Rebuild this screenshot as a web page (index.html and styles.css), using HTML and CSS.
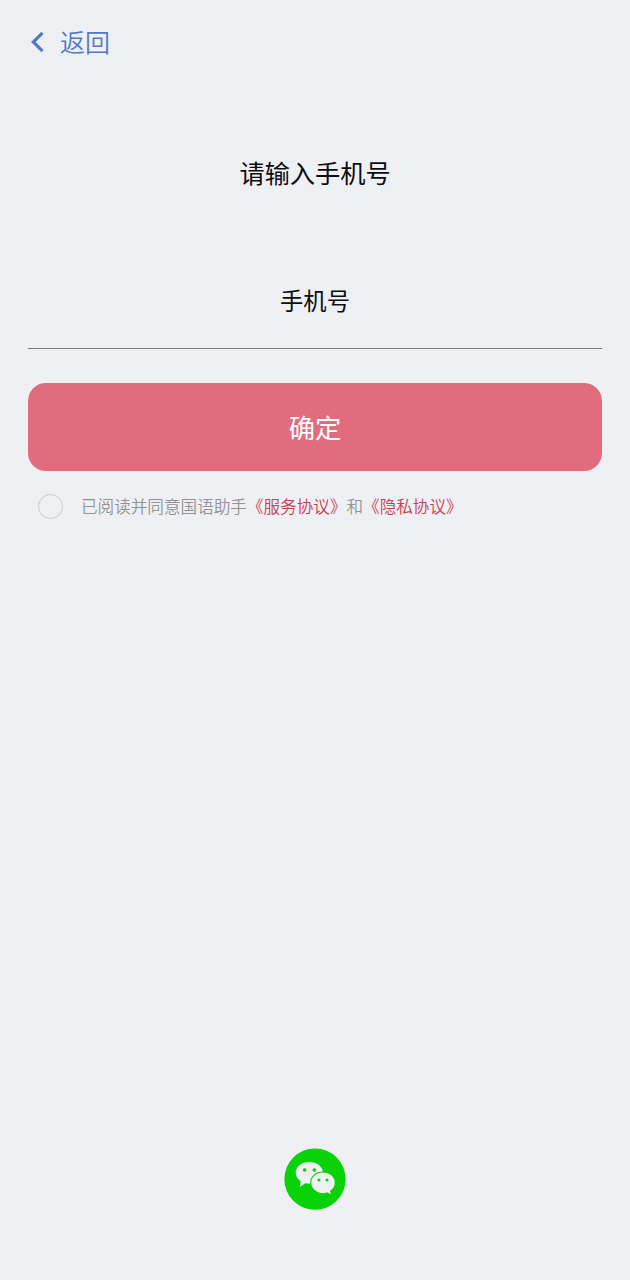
FILE: index.html
```html
<!DOCTYPE html>
<html lang="zh-CN">
<head>
<meta charset="utf-8">
<title>请输入手机号</title>
<link rel="stylesheet" href="styles.css">
</head>
<body>
<div class="screen">
  <header class="nav">
    <svg class="chevron" viewBox="0 0 16 24" fill="none"><path d="M13.5 2.8 4.3 12l9.2 9.2" stroke="#4f7ac9" stroke-width="3.2"/></svg>
    <span>返回</span>
  </header>
  <h1 class="title">请输入手机号</h1>
  <div class="field">手机号</div>
  <button class="submit">确定</button>
  <div class="agree">
    <span class="radio"></span>
    <p class="terms">已阅读并同意国语助手<span class="link">《服务协议》</span>和<span class="link">《隐私协议》</span></p>
  </div>
  <footer class="social">
    <svg class="wechat" viewBox="12 9 186 186">
      <circle cx="105" cy="102.5" r="92" fill="#08d208"/>
      <path d="M88 51c-23 0-41 14-41 32 0 11 6 19 15 25l-2 17 16-10c5 1 9 1 14 1 20-1 39-14 39-33 0-18-18-32-41-32Z" fill="#eef0f4"/>
      <path d="M129 81c-21 0-37 14-37 32s16 33 37 33c5 0 9-1 13-2l13 8-3-14c9-6 14-15 14-25 0-18-16-32-37-32Z" fill="#eef0f4" stroke="#08d208" stroke-width="3.5"/>
      <g fill="#08d208"><circle cx="74" cy="75" r="5.5"/><circle cx="103" cy="75" r="5.5"/><circle cx="117" cy="105" r="4.5"/><circle cx="141" cy="105" r="4.5"/></g>
    </svg>
  </footer>
</div>
</body>
</html>
```
FILE: styles.css
```css
* { box-sizing: border-box; }
body {
  margin: 0;
  background: #eef0f4;
  font-family: "Noto Sans CJK SC", sans-serif;
  color: #0b0b10;
}
.screen {
  height: 1280px;
  padding: 23px 28px 70px;
  display: flex;
  flex-direction: column;
}
.nav {
  display: flex;
  align-items: center;
  height: 36px;
  padding-left: 1px;
  gap: 15px;
  color: #4f7ac9;
  font-size: 25px;
  font-weight: 350;
}
.chevron { width: 16px; height: 24px; margin-top: 2px; }
.title {
  margin: 95px 0 0;
  font-size: 25.2px;
  line-height: 36px;
  font-weight: 400;
  text-align: center;
}
.field {
  margin-top: 92px;
  height: 67px;
  border-bottom: 1.5px solid #777a80;
  font-size: 23.3px;
  line-height: 36px;
  text-align: center;
}
.submit {
  margin-top: 34px;
  height: 88px;
  padding: 0;
  border: 0;
  border-radius: 18px;
  background: #e06c7e;
  color: #fff;
  font: 400 26.3px/88px "Noto Sans CJK SC", sans-serif;
}
.agree {
  display: flex;
  align-items: center;
  margin-top: 21px;
  padding-left: 10px;
  height: 28px;
  gap: 18px;
}
.radio {
  width: 25px;
  height: 25px;
  border: 1.5px solid #c9cacd;
  border-radius: 50%;
}
.terms {
  margin: 0;
  font-size: 16.6px;
  line-height: 28px;
  color: #929397;
  font-weight: 350;
}
.link { color: #cb3d55; }
.social { margin-top: auto; text-align: center; line-height: 0; }
.wechat { width: 62px; height: 62px; }
```
